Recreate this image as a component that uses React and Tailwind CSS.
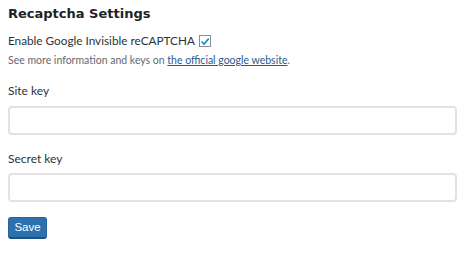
export default function App() {
  return (
    <div className="w-[472px] h-[253px] bg-white px-2 pt-[4px] text-[#2c3338]" style={{ fontFamily: 'Lato, "Open Sans", sans-serif' }}>
      <h2 className="text-[13px] font-bold leading-[20px] text-[#1d2327]" style={{ fontFamily: '"DejaVu Sans", sans-serif' }}>
        Recaptcha Settings
      </h2>
      <div className="mt-[9px] flex items-center gap-[4px] text-[11.75px] leading-[16px]">
        <span>Enable Google Invisible reCAPTCHA</span>
        <span className="flex h-[12px] w-[12px] items-center justify-center border border-[#8c8f94] bg-white">
          <svg viewBox="0 0 12 12" className="h-[11px] w-[11px]">
            <path d="M2 6.2 L4.8 9 L10.5 2.5" fill="none" stroke="#1e8cbe" strokeWidth="2" />
          </svg>
        </span>
      </div>
      <p className="mt-[4px] text-[10.5px] leading-[14px] text-[#646970]">
        See more information and keys on{' '}
        <a href="#" className="text-[#2c5a8c] underline">the official google website</a>.
      </p>
      <label className="mt-[16px] block text-[12px] leading-[16px]">Site key</label>
      <input className="mt-[7px] block h-[29px] w-[449px] rounded-[4px] border-2 border-[#e2e2e2] bg-white" />
      <label className="mt-[16px] block text-[12px] leading-[16px]">Secret key</label>
      <input className="mt-[6px] block h-[29px] w-[449px] rounded-[4px] border-2 border-[#e2e2e2] bg-white" />
      <button className="mt-[15px] block h-[22px] w-[39px] rounded-[3px] border border-[#2a6398] border-b-2 border-b-[#1d4f7e] bg-[#2c70ad] text-[11.5px] text-white" style={{ fontFamily: '"Liberation Sans", Arial, sans-serif' }}>
        Save
      </button>
    </div>
  );
}
